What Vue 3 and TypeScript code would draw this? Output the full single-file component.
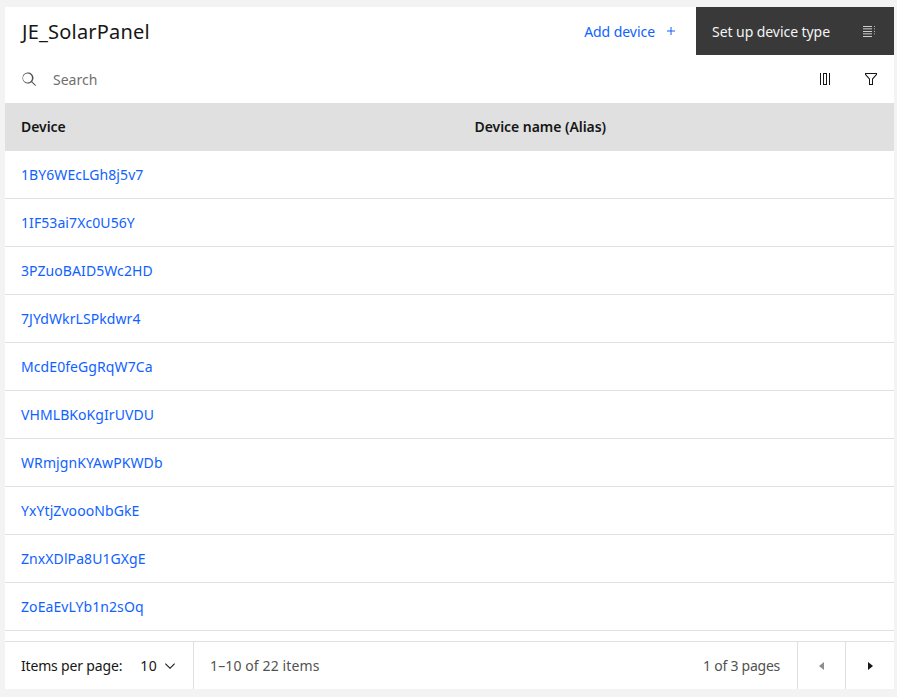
<script setup lang="ts">
const devices: string[] = [
  '1BY6WEcLGh8j5v7', '1IF53ai7Xc0U56Y', '3PZuoBAID5Wc2HD', '7JYdWkrLSPkdwr4', 'McdE0feGgRqW7Ca',
  'VHMLBKoKgIrUVDU', 'WRmjgnKYAwPKWDb', 'YxYtjZvoooNbGkE', 'ZnxXDlPa8U1GXgE', 'ZoEaEvLYb1n2sOq',
]
</script>

<template>
  <div class="page">
    <main class="card">
      <header class="head">
        <h1 class="title">JE_SolarPanel</h1>
        <div class="actions">
          <button class="add">
            <span>Add device</span>
            <svg width="16" height="16" viewBox="0 0 16 16" fill="currentColor"><path d="M8.500 4v3.500H12v1H8.500V12h-1V8.500H4v-1h3.500V4z"/></svg>
          </button>
          <button class="setup">
            <span>Set up device type</span>
            <svg width="16" height="16" viewBox="0 0 16 16" fill="#fff"><path d="M2 3h9v.8H2zM2 5.500h9v.8H2zM2 8h9v.8H2zM2 10.500h9v.8H2zM2 13h9v.8H2zM13 3h.8v.8H13zM13 5.500h.8v.8H13zM13 8h.8v.8H13zM13 10.500h.8v.8H13z"/></svg>
          </button>
        </div>
      </header>

      <div class="toolbar">
        <svg class="search-icon" width="16" height="16" viewBox="0 0 16 16" fill="#525252"><path d="M15 14.300l-3.800-3.800a5.500 5.500 0 1 0-.7.7l3.800 3.800zM2 7a4.500 4.500 0 1 1 9 0 4.500 4.500 0 0 1-9 0z"/></svg>
        <span class="search">Search</span>
        <div class="tools">
          <span class="tool">
            <svg width="16" height="16" viewBox="0 0 16 16" fill="#161616"><path d="M3 2h1v12H3zM12 2h1v12h-1zM6 2h4v12H6zm1 1v10h2V3z"/></svg>
          </span>
          <span class="tool">
            <svg width="16" height="16" viewBox="0 0 16 16" fill="#161616" fill-rule="evenodd"><path d="M2 2h12v1.700L10 8.200V14H6V8.200L2 3.700zm1 1v.3l4 4.500V13h2V7.800l4-4.500V3z"/></svg>
          </span>
        </div>
      </div>

      <div class="thead">
        <div class="col-a">Device</div>
        <div>Device name (Alias)</div>
      </div>
      <div class="rows">
        <div v-for="d in devices" :key="d" class="row"><a class="link">{{ d }}</a></div>
      </div>

      <footer class="foot">
        <div class="per-page">
          <span class="per-label">Items per page:</span>
          <span class="per-value">10</span>
          <svg width="16" height="16" viewBox="0 0 16 16" fill="#161616"><path d="M8 11 3 6l.7-.7L8 9.600l4.300-4.300.7.7z"/></svg>
        </div>
        <div class="range">1–10 of 22 items</div>
        <div class="pages">1 of 3 pages</div>
        <button class="nav">
          <svg width="16" height="16" viewBox="0 0 16 16" fill="#8d8d8d"><path d="M10 4v8L5 8z"/></svg>
        </button>
        <button class="nav nav-last">
          <svg width="16" height="16" viewBox="0 0 16 16" fill="#161616"><path d="M6 4v8l5-4z"/></svg>
        </button>
      </footer>
    </main>
  </div>
</template>

<style scoped>
.page {
  width: 897px;
  height: 697px;
  box-sizing: border-box;
  padding: 7px 3px 8px 5px;
  background: #f3f3f3;
  font-family: "Noto Sans", "Liberation Sans", sans-serif;
  font-size: 14px;
  letter-spacing: 0.08px;
  color: #161616;
}
.card {
  height: 682px;
  background: #fff;
  display: flex;
  flex-direction: column;
}
button {
  border: 0;
  background: none;
  font: inherit;
  letter-spacing: inherit;
  padding: 0;
  display: flex;
  align-items: center;
}
.head {
  height: 48px;
  display: flex;
  align-items: center;
  justify-content: space-between;
  padding-left: 17px;
}
.title {
  margin: 0;
  font-size: 20px;
  font-weight: 400;
  letter-spacing: 0.2px;
  color: #161616;
}
.actions {
  display: flex;
  height: 48px;
}
.add {
  color: #0f62fe;
  gap: 8px;
  padding-right: 17px;
  letter-spacing: -0.05px;
}
.setup {
  width: 198px;
  height: 48px;
  box-sizing: border-box;
  background: #393939;
  color: #f4f4f4;
  padding: 0 17px 0 16px;
  justify-content: space-between;
  letter-spacing: -0.06px;
}
.toolbar {
  height: 48px;
  display: flex;
  align-items: center;
  padding-left: 16px;
}
.search {
  margin-left: 16px;
  color: #6f6f6f;
  letter-spacing: 0;
}
.tools {
  margin-left: auto;
  display: flex;
}
.tool {
  width: 46px;
  height: 48px;
  display: flex;
  align-items: center;
  justify-content: center;
}
.thead {
  height: 48px;
  box-sizing: border-box;
  padding: 0 0 1px 16px;
  background: #e0e0e0;
  display: flex;
  align-items: center;
  font-weight: 600;
  letter-spacing: -0.05px;
}
.col-a {
  width: 453.5px;
}
.row {
  height: 47px;
  border-bottom: 1px solid #e0e0e0;
  display: flex;
  align-items: center;
  padding-left: 16px;
}
.link {
  color: #0f62fe;
}
.foot {
  margin-top: 10px;
  height: 47px;
  border-top: 1px solid #e0e0e0;
  display: flex;
  align-items: stretch;
}
.per-page {
  width: 189px;
  box-sizing: border-box;
  padding-left: 16px;
  display: flex;
  align-items: center;
  border-right: 1px solid #e0e0e0;
}
.per-label {
  letter-spacing: -0.17px;
}
.per-value {
  margin-left: 18px;
  letter-spacing: 0.5px;
}
.per-page svg {
  margin-left: 5px;
}
.range {
  display: flex;
  align-items: center;
  padding-left: 16px;
  color: #525252;
  letter-spacing: 0.12px;
}
.pages {
  margin-left: auto;
  display: flex;
  align-items: center;
  padding-right: 17px;
  color: #525252;
  letter-spacing: -0.25px;
}
.nav {
  width: 48px;
  justify-content: center;
  border-left: 1px solid #e0e0e0;
  box-sizing: border-box;
}
.nav-last {
  width: 49px;
}
</style>

<style>
html, body { background: #f3f3f3; }
</style>
